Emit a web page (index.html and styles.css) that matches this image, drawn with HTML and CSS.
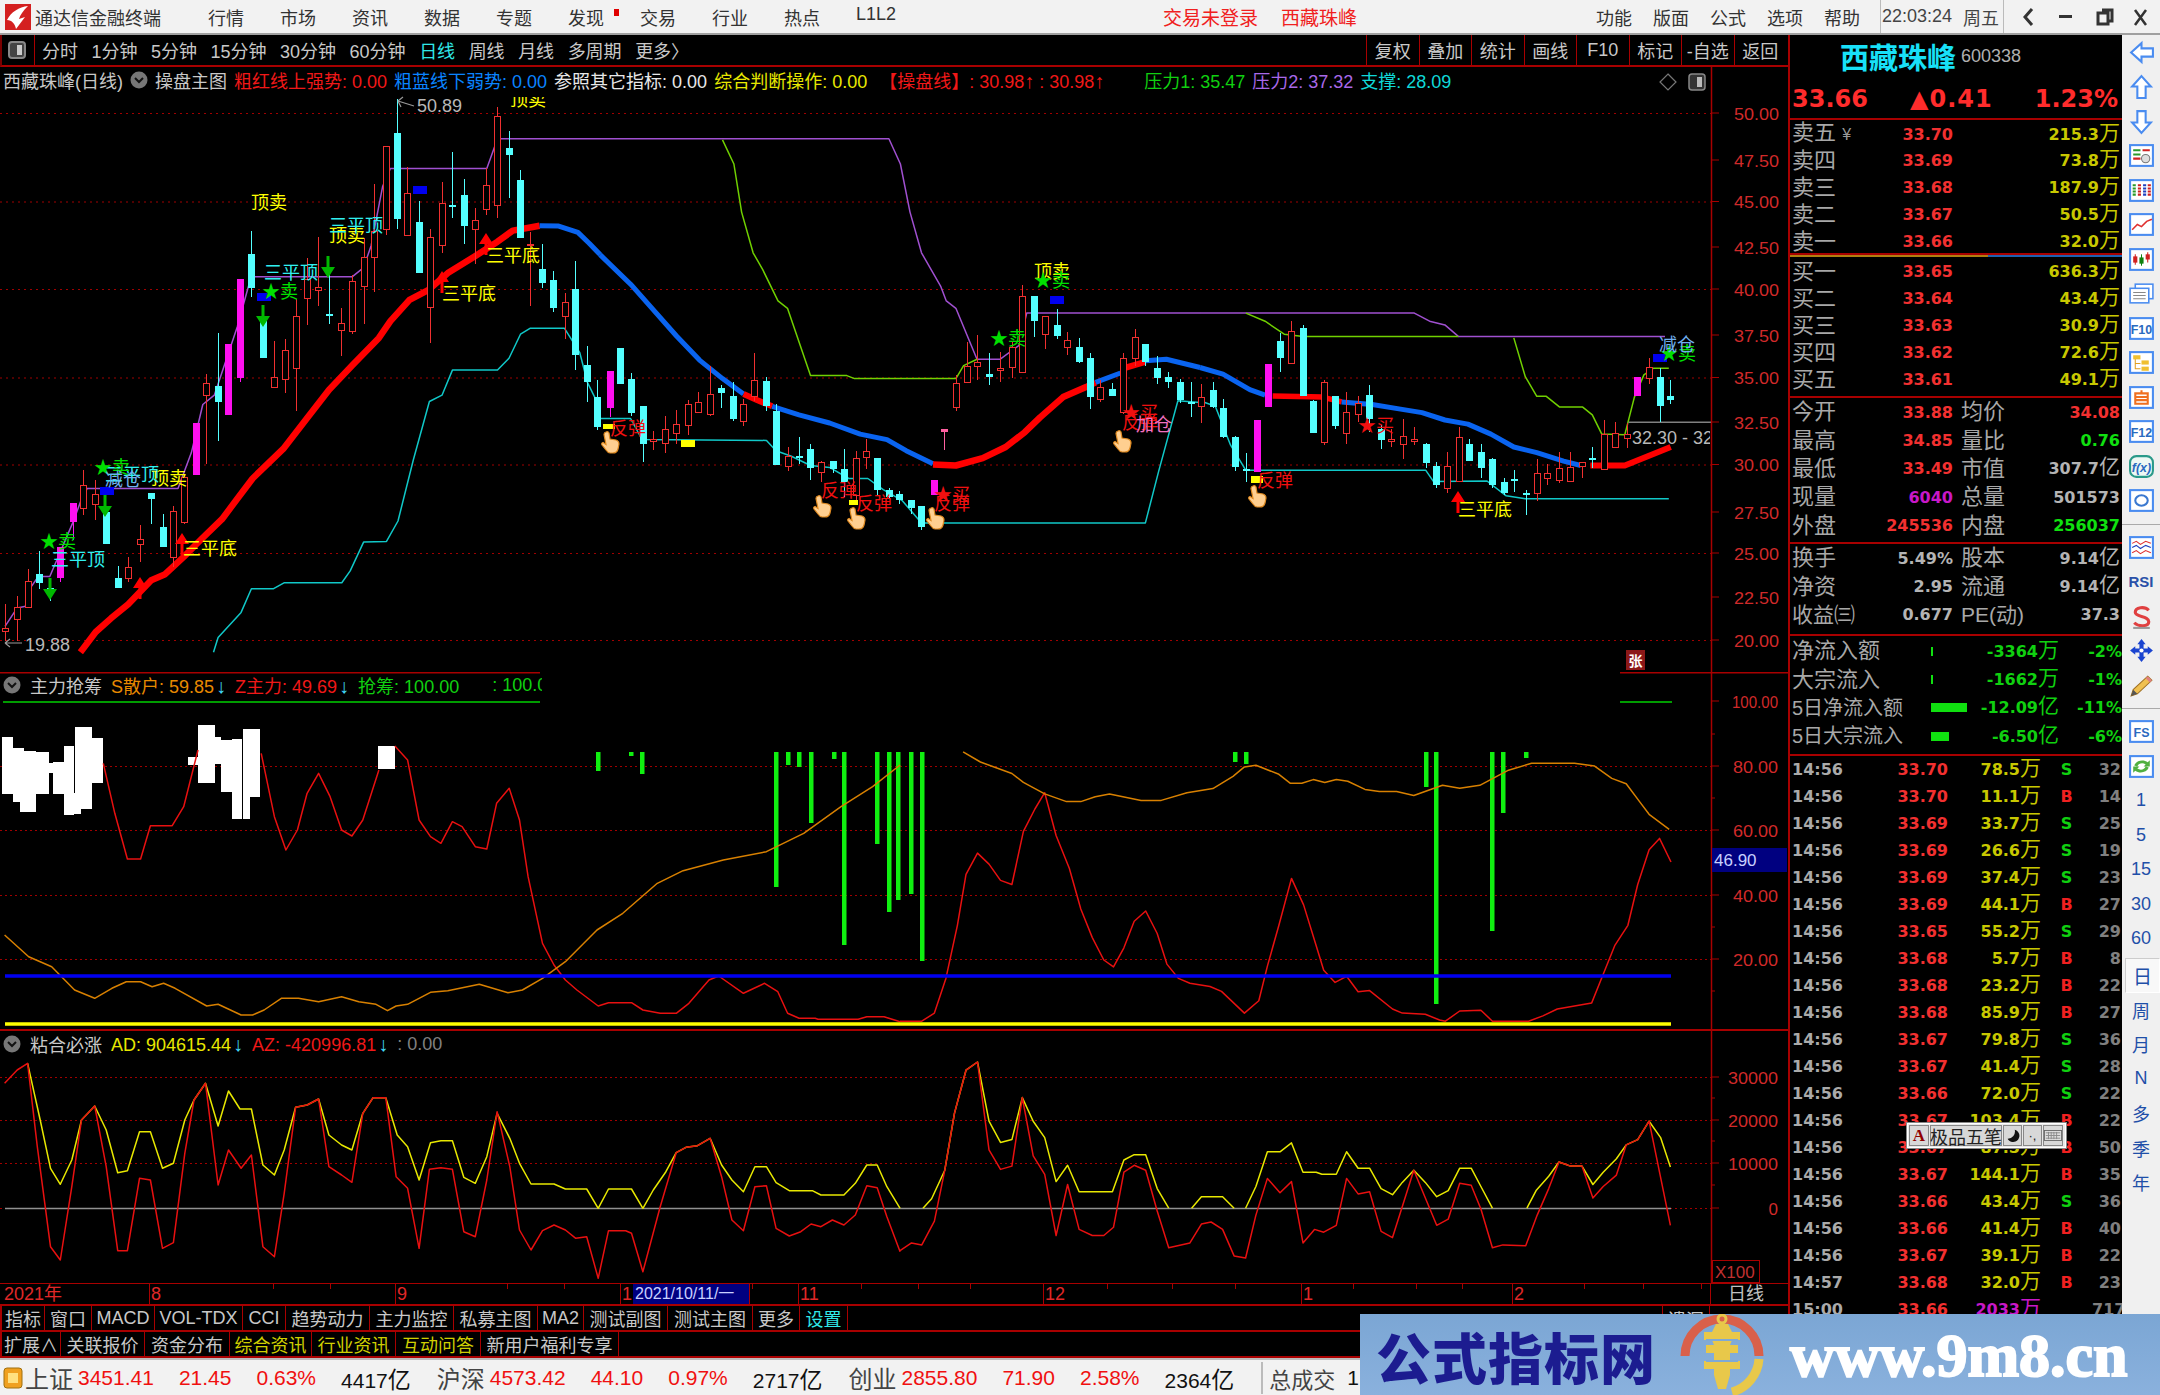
FILE: index.html
```html
<!DOCTYPE html>
<html lang="zh">
<head>
<meta charset="utf-8">
<title>通达信金融终端</title>
<link rel="stylesheet" href="styles.css">
</head>
<body>
<div class="app">
  <header class="titlebar">
    <svg class="logo" viewBox="0 0 26 26"><rect width="26" height="26" fill="#d42020"/><path d="M2 16 C6 8 14 3 23 2 C18 7 15 11 14 15 L20 13 L11 25 C10 20 7 16 2 16Z" fill="#fff"/></svg>
    <span class="appname">通达信金融终端</span>
    <nav class="menu"><span>行情</span><span>市场</span><span>资讯</span><span>数据</span><span>专题</span><span class="flag">发现</span><span>交易</span><span>行业</span><span>热点</span><span>L1L2</span></nav>
    <span class="login">交易未登录</span><span class="stockname">西藏珠峰</span>
    <nav class="menu2"><span>功能</span><span>版面</span><span>公式</span><span>选项</span><span>帮助</span></nav>
    <div class="clock"><span class="time">22:03:24</span><span class="wk">周五</span></div>
    <svg class="winbtns" viewBox="0 0 150 34"><path d="M28 9 L21 17 L28 25" fill="none" stroke="#333" stroke-width="3"/><rect x="55" y="15" width="13" height="3" fill="#333"/><path d="M98 10h10v11h-3M94 13h10v11h-10z" fill="none" stroke="#333" stroke-width="3"/><path d="M131 10 L142 25 M142 10 L131 25" stroke="#333" stroke-width="2.5"/></svg>
  </header>

  <main class="main">
    <section class="chartcol">
      <div class="toolbar">
        <svg class="tb-icon" viewBox="0 0 24 24"><rect x="4" y="4" width="16" height="16" rx="3" fill="#444" stroke="#888" stroke-width="2"/><rect x="12" y="7" width="5" height="10" fill="#ccc"/></svg>
        <div class="periods"><span>分时</span><span>1分钟</span><span>5分钟</span><span>15分钟</span><span>30分钟</span><span>60分钟</span><span class="on">日线</span><span>周线</span><span>月线</span><span>多周期</span><span>更多〉</span></div>
        <div class="tools"><span>复权</span><span>叠加</span><span>统计</span><span>画线</span><span>F10</span><span>标记</span><span>-自选</span><span>返回</span></div>
      </div>

      <div class="panel p1">
        <svg id="chart1" class="plot" viewBox="0 67 1788 605"></svg>
        <div class="legend l1">
          <span class="g">西藏珠峰(日线)</span>
          <svg class="cir" viewBox="0 0 18 18"><circle cx="9" cy="9" r="8.5" fill="#777"/><path d="M5 7 L9 11 L13 7" fill="none" stroke="#111" stroke-width="2"/></svg>
          <span class="g">操盘主图</span>
          <span class="r">粗红线上强势: 0.00</span>
          <span class="b">粗蓝线下弱势: 0.00</span>
          <span class="w">参照其它指标: 0.00</span>
          <span class="y">综合判断操作: 0.00</span>
          <span class="r wide">【操盘线】: 30.98<i class="up">↑</i> : 30.98<i class="up">↑</i></span>
          <span class="gn">压力1: 35.47</span>
          <span class="pu">压力2: 37.32</span>
          <span class="cy">支撑: 28.09</span>
        </div>
      </div>

      <div class="panel p2">
        <svg id="chart2" class="plot" viewBox="0 672 1788 359"></svg>
        <div class="legend l2">
          <svg class="cir" viewBox="0 0 18 18"><circle cx="9" cy="9" r="8.5" fill="#777"/><path d="M5 7 L9 11 L13 7" fill="none" stroke="#111" stroke-width="2"/></svg>
          <span class="g">主力抢筹</span>
          <span class="o">S散户: 59.85<i class="ar">↓</i></span>
          <span class="r">Z主力: 49.69<i class="ar">↓</i></span>
          <span class="gn">抢筹: 100.00</span>
          <span class="gn clip">: 100.0</span>
        </div>
      </div>

      <div class="panel p3">
        <svg id="chart3" class="plot" viewBox="0 1031 1788 252"></svg>
        <div class="legend l3">
          <svg class="cir" viewBox="0 0 18 18"><circle cx="9" cy="9" r="8.5" fill="#777"/><path d="M5 7 L9 11 L13 7" fill="none" stroke="#111" stroke-width="2"/></svg>
          <span class="g">粘合必涨</span>
          <span class="y">AD: 904615.44<i class="ar">↓</i></span>
          <span class="r">AZ: -420996.81<i class="ar">↓</i></span>
          <span class="dg">: 0.00</span>
        </div>
      </div>

      <div class="dates">
        <svg id="ticks" class="ticks" viewBox="0 0 1788 6"></svg>
        <span>2021年</span><span>8</span><span>9</span><span>1</span><span class="sel">2021/10/11/一</span><span></span><span>11</span><span>12</span><span>1</span><span>2</span><span class="dl">日线</span>
      </div>
      <div class="btnrow b1"><span>指标</span><span>窗口</span><span>MACD</span><span>VOL-TDX</span><span>CCI</span><span>趋势动力</span><span>主力监控</span><span>私募主图</span><span>MA2</span><span>测试副图</span><span>测试主图</span><span>更多</span><span class="cyt">设置</span><span class="fill"></span><span class="lk">遗漏</span></div>
      <div class="btnrow b2"><span>扩展∧</span><span>关联报价</span><span>资金分布</span><span class="yt">综合资讯</span><span class="yt">行业资讯</span><span class="yt">互动问答</span><span>新用户福利专享</span></div>
    </section>

    <aside class="quote">
      <div class="qtitle"><span class="qname">西藏珠峰</span><span class="qcode">600338</span></div>
      <div class="qprice"><span>33.66</span><span>▲0.41</span><span>1.23%</span></div>
      <div class="sec five">
        <div class="r5"><span class="lb">卖五 <i class="yen">¥</i></span><b class="rd">33.70</b><b class="ol">215.3<em>万</em></b></div>
        <div class="r5"><span class="lb">卖四</span><b class="rd">33.69</b><b class="ol">73.8<em>万</em></b></div>
        <div class="r5"><span class="lb">卖三</span><b class="rd">33.68</b><b class="ol">187.9<em>万</em></b></div>
        <div class="r5"><span class="lb">卖二</span><b class="rd">33.67</b><b class="ol">50.5<em>万</em></b></div>
        <div class="r5"><span class="lb">卖一</span><b class="rd">33.66</b><b class="ol">32.0<em>万</em></b></div>
      </div>
      <div class="twotone"></div>
      <div class="sec five buy">
        <div class="r5"><span class="lb">买一</span><b class="rd">33.65</b><b class="ol">636.3<em>万</em></b></div>
        <div class="r5"><span class="lb">买二</span><b class="rd">33.64</b><b class="ol">43.4<em>万</em></b></div>
        <div class="r5"><span class="lb">买三</span><b class="rd">33.63</b><b class="ol">30.9<em>万</em></b></div>
        <div class="r5"><span class="lb">买四</span><b class="rd">33.62</b><b class="ol">72.6<em>万</em></b></div>
        <div class="r5"><span class="lb">买五</span><b class="rd">33.61</b><b class="ol">49.1<em>万</em></b></div>
      </div>
      <div class="sec stats">
        <div class="rs"><span class="lb">今开</span><b class="rd">33.88</b><span class="lb">均价</span><b class="rd">34.08</b></div>
        <div class="rs"><span class="lb">最高</span><b class="rd">34.85</b><span class="lb">量比</span><b class="gr">0.76</b></div>
        <div class="rs"><span class="lb">最低</span><b class="rd">33.49</b><span class="lb">市值</span><b class="wt">307.7<em>亿</em></b></div>
        <div class="rs"><span class="lb">现量</span><b class="mg">6040</b><span class="lb">总量</span><b class="wt">501573</b></div>
        <div class="rs"><span class="lb">外盘</span><b class="rd">245536</b><span class="lb">内盘</span><b class="gr">256037</b></div>
      </div>
      <div class="sec stats s3">
        <div class="rs"><span class="lb">换手</span><b class="wt">5.49%</b><span class="lb">股本</span><b class="wt">9.14<em>亿</em></b></div>
        <div class="rs"><span class="lb">净资</span><b class="wt">2.95</b><span class="lb">流通</span><b class="wt">9.14<em>亿</em></b></div>
        <div class="rs"><span class="lb lbn">收益㈢</span><b class="wt">0.677</b><span class="lb lbn">PE(动)</span><b class="wt">37.3</b></div>
      </div>
      <div class="sec flow">
        <div class="rf"><span class="lb">净流入额</span><div class="fv"><i class="bar b0"></i><b class="gb">-3364<em>万</em></b></div><b class="gb">-2%</b></div>
        <div class="rf"><span class="lb">大宗流入</span><div class="fv"><i class="bar b0"></i><b class="gb">-1662<em>万</em></b></div><b class="gb">-1%</b></div>
        <div class="rf"><span class="lb lb5">5日净流入额</span><div class="fv"><i class="bar b1w"></i><b class="gb">-12.09<em>亿</em></b></div><b class="gb">-11%</b></div>
        <div class="rf"><span class="lb lb5">5日大宗流入</span><div class="fv"><i class="bar b2w"></i><b class="gb">-6.50<em>亿</em></b></div><b class="gb">-6%</b></div>
      </div>
      <div class="trades">
        <div class="rt"><b>14:56</b><b class="rd">33.70</b><b class="ol">78.5<em>万</em></b><b class="s">S</b><b class="n">32</b></div>
        <div class="rt"><b>14:56</b><b class="rd">33.70</b><b class="ol">11.1<em>万</em></b><b class="bb">B</b><b class="n">14</b></div>
        <div class="rt"><b>14:56</b><b class="rd">33.69</b><b class="ol">33.7<em>万</em></b><b class="s">S</b><b class="n">25</b></div>
        <div class="rt"><b>14:56</b><b class="rd">33.69</b><b class="ol">26.6<em>万</em></b><b class="s">S</b><b class="n">19</b></div>
        <div class="rt"><b>14:56</b><b class="rd">33.69</b><b class="ol">37.4<em>万</em></b><b class="s">S</b><b class="n">23</b></div>
        <div class="rt"><b>14:56</b><b class="rd">33.69</b><b class="ol">44.1<em>万</em></b><b class="bb">B</b><b class="n">27</b></div>
        <div class="rt"><b>14:56</b><b class="rd">33.65</b><b class="ol">55.2<em>万</em></b><b class="s">S</b><b class="n">29</b></div>
        <div class="rt"><b>14:56</b><b class="rd">33.68</b><b class="ol">5.7<em>万</em></b><b class="bb">B</b><b class="n">8</b></div>
        <div class="rt"><b>14:56</b><b class="rd">33.68</b><b class="ol">23.2<em>万</em></b><b class="bb">B</b><b class="n">22</b></div>
        <div class="rt"><b>14:56</b><b class="rd">33.68</b><b class="ol">85.9<em>万</em></b><b class="bb">B</b><b class="n">27</b></div>
        <div class="rt"><b>14:56</b><b class="rd">33.67</b><b class="ol">79.8<em>万</em></b><b class="s">S</b><b class="n">36</b></div>
        <div class="rt"><b>14:56</b><b class="rd">33.67</b><b class="ol">41.4<em>万</em></b><b class="s">S</b><b class="n">28</b></div>
        <div class="rt"><b>14:56</b><b class="rd">33.66</b><b class="ol">72.0<em>万</em></b><b class="s">S</b><b class="n">22</b></div>
        <div class="rt"><b>14:56</b><b class="rd">33.67</b><b class="ol">103.4<em>万</em></b><b class="bb">B</b><b class="n">22</b></div>
        <div class="rt"><b>14:56</b><b class="rd">33.67</b><b class="ol">87.5<em>万</em></b><b class="bb">B</b><b class="n">50</b></div>
        <div class="rt"><b>14:56</b><b class="rd">33.67</b><b class="ol">144.1<em>万</em></b><b class="bb">B</b><b class="n">35</b></div>
        <div class="rt"><b>14:56</b><b class="rd">33.66</b><b class="ol">43.4<em>万</em></b><b class="s">S</b><b class="n">36</b></div>
        <div class="rt"><b>14:56</b><b class="rd">33.66</b><b class="ol">41.4<em>万</em></b><b class="bb">B</b><b class="n">40</b></div>
        <div class="rt"><b>14:56</b><b class="rd">33.67</b><b class="ol">39.1<em>万</em></b><b class="bb">B</b><b class="n">22</b></div>
        <div class="rt"><b>14:57</b><b class="rd">33.68</b><b class="ol">32.0<em>万</em></b><b class="bb">B</b><b class="n">23</b></div>
        <div class="rt"><b>15:00</b><b class="rd">33.66</b><b class="mg">2033<em>万</em></b><b></b><b class="n">717</b></div>
      </div>
      <div class="ime">
        <b class="ia">A</b><span class="im">极品五笔</span>
        <svg class="ic" viewBox="0 0 19 21"><path d="M12 4 A7 7 0 1 1 4 14 A8 8 0 0 0 12 4Z" fill="#111"/></svg>
        <span class="ic">·,</span>
        <svg class="kb" viewBox="0 0 20 12"><rect x=".5" y=".5" width="19" height="11" fill="#ddd" stroke="#666"/><path d="M2 3h16M2 6h16M2 9h16M5 2v8M8 2v8M11 2v8M14 2v8" stroke="#888" stroke-width="1"/></svg>
      </div>
    </aside>

    <aside class="strip">
      <div class="ti"><svg viewBox="0 0 26 26"><path d="M3 13 L13 4 V9 H24 V17 H13 V22 Z" fill="#fff" stroke="#4a8cf0" stroke-width="2"/></svg></div>
      <div class="ti"><svg viewBox="0 0 26 26"><path d="M13 3 L22 13 H17 V24 H9 V13 H4 Z" fill="#fff" stroke="#4a8cf0" stroke-width="2"/></svg></div>
      <div class="ti"><svg viewBox="0 0 26 26"><path d="M13 24 L22 14 H17 V3 H9 V14 H4 Z" fill="#fff" stroke="#4a8cf0" stroke-width="2"/></svg></div>
      <div class="ti"><svg viewBox="0 0 26 26"><rect x="2" y="3" width="22" height="20" fill="#fff" stroke="#4a8cf0" stroke-width="2"/><path d="M5 8h7M5 12h7" stroke="#2a9a2a" stroke-width="2"/><path d="M14 8h7M5 16h7" stroke="#d02020" stroke-width="2"/><circle cx="17" cy="16" r="4" fill="#ddd" stroke="#777"/></svg></div>
      <div class="ti"><svg viewBox="0 0 26 26"><rect x="2" y="3" width="22" height="20" fill="#fff" stroke="#4a8cf0" stroke-width="2"/><path d="M6 7v12" stroke="#2a9a2a" stroke-width="3" stroke-dasharray="2 1"/><path d="M11 7v12" stroke="#d02020" stroke-width="3" stroke-dasharray="2 1"/><path d="M16 7v12" stroke="#2040c0" stroke-width="3" stroke-dasharray="2 1"/><path d="M20.500 7v12" stroke="#d02020" stroke-width="3" stroke-dasharray="2 1"/></svg></div>
      <div class="ti"><svg viewBox="0 0 26 26"><rect x="2" y="3" width="22" height="20" fill="#fff" stroke="#4a8cf0" stroke-width="2"/><path d="M4 18 L9 13 L13 15 L18 10 L23 8" fill="none" stroke="#e03030" stroke-width="1.500"/></svg></div>
      <div class="ti"><svg viewBox="0 0 26 26"><rect x="2" y="3" width="22" height="20" fill="#fff" stroke="#4a8cf0" stroke-width="2"/><path d="M7 8v10M19 6v10" stroke="#d02020"/><path d="M13 8v11" stroke="#108010"/><rect x="5" y="10" width="4" height="6" fill="#d02020"/><rect x="11" y="11" width="4" height="6" fill="#108010"/><rect x="17" y="8" width="4" height="5" fill="#d02020"/></svg></div>
      <div class="ti"><svg viewBox="0 0 26 26"><rect x="7" y="4" width="17" height="14" fill="#fff" stroke="#4a8cf0" stroke-width="1.500"/><rect x="2" y="8" width="18" height="14" fill="#fff" stroke="#4a8cf0" stroke-width="1.500"/><path d="M5 12h12M5 15h12M5 18h12" stroke="#888"/></svg></div>
      <div class="ti"><svg viewBox="0 0 26 26"><rect x="2" y="3" width="22" height="20" fill="#fff" stroke="#4a8cf0" stroke-width="2"/><text class="ict" x="13" y="18">F10</text></svg></div>
      <div class="ti"><svg viewBox="0 0 26 26"><rect x="2" y="3" width="22" height="20" fill="#fff" stroke="#4a8cf0" stroke-width="2"/><path d="M7 9v10h5M7 14h5" fill="none" stroke="#e0a020"/><rect x="5" y="6" width="7" height="4" fill="#f0c030"/><rect x="13" y="11" width="7" height="4" fill="#f0c030"/><rect x="13" y="17" width="7" height="4" fill="#f0c030"/></svg></div>
      <div class="ti"><svg viewBox="0 0 26 26"><rect x="2" y="3" width="22" height="20" fill="#fff" stroke="#4a8cf0" stroke-width="2"/><path d="M7 9h12v10h-12z M7 12.500h12M7 15.500h12M13 6v3" fill="none" stroke="#f07020" stroke-width="2"/></svg></div>
      <div class="ti"><svg viewBox="0 0 26 26"><rect x="2" y="3" width="22" height="20" fill="#fff" stroke="#4a8cf0" stroke-width="2"/><text class="ict" x="13" y="18">F12</text></svg></div>
      <div class="ti"><svg viewBox="0 0 26 26"><rect x="2" y="3" width="22" height="20" rx="6" fill="#eef8f4" stroke="#2a9a8a" stroke-width="2"/><text class="ict fx" x="13" y="18">f(x)</text></svg></div>
      <div class="ti"><svg viewBox="0 0 26 26"><rect x="2" y="3" width="22" height="20" fill="#fff" stroke="#4a8cf0" stroke-width="2"/><ellipse cx="13" cy="13" rx="6" ry="5" fill="none" stroke="#3a78d0" stroke-width="2"/></svg></div>
      <div class="tsep"></div>
      <div class="ti"><svg viewBox="0 0 26 26"><rect x="2" y="3" width="22" height="20" fill="#fff" stroke="#4a8cf0" stroke-width="2"/><path d="M4 9 L8 7 L12 10 L17 7 L22 9" fill="none" stroke="#e03030"/><path d="M4 13 L8 11 L12 14 L17 11 L22 13" fill="none" stroke="#2040c0"/><path d="M4 18 L8 16 L12 19 L17 16 L22 18" fill="none" stroke="#e03030"/></svg></div>
      <div class="ti rsi">RSI</div>
      <div class="ti"><svg viewBox="0 0 26 26"><path d="M20 7 C16 3 7 4 7 9 C7 14 20 12 20 18 C20 23 10 23 6 19" fill="none" stroke="#e04040" stroke-width="3"/><path d="M5 24h16" stroke="#999" stroke-width="2"/></svg></div>
      <div class="ti"><svg viewBox="0 0 26 26"><path d="M13 2 L17 7 H15 V11 H19 V9 L24 13 L19 17 V15 H15 V19 H17 L13 24 L9 19 H11 V15 H7 V17 L2 13 L7 9 V11 H11 V7 H9 Z" fill="#1a44d0"/><circle cx="13" cy="13" r="2" fill="#fff"/></svg></div>
      <div class="ti"><svg viewBox="0 0 26 26"><path d="M3 23 L5 17 L19 4 L23 8 L9 21 Z" fill="#f0c050" stroke="#a07020"/><path d="M19 4 L23 8 L21 10 L17 6 Z" fill="#e08080"/><path d="M3 23 L5 17 L9 21 Z" fill="#555"/></svg></div>
      <div class="tsep"></div>
      <div class="ti"><svg viewBox="0 0 26 26"><rect x="2" y="3" width="22" height="20" fill="#fff" stroke="#4a8cf0" stroke-width="2"/><text class="ict" x="13" y="18">FS</text></svg></div>
      <div class="ti"><svg viewBox="0 0 26 26"><rect x="2" y="3" width="22" height="20" fill="#fff" stroke="#4a8cf0" stroke-width="2"/><path d="M6 12 C8 7 15 6 19 9 L21 7 V13 H15 L17 11 C14 9 10 10 9 13Z M20 14 C18 19 11 20 7 17 L5 19 V13 H11 L9 15 C12 17 16 16 17 13Z" fill="#50b040"/></svg></div>
      <div class="tx">1</div><div class="tx">5</div><div class="tx">15</div><div class="tx">30</div><div class="tx">60</div>
      <div class="tx sel">日</div><div class="tx">周</div><div class="tx">月</div><div class="tx">N</div><div class="tx">多</div><div class="tx">季</div><div class="tx">年</div>
    </aside>
  </main>

  <footer class="status">
    <svg class="st-ic" viewBox="0 0 20 22"><rect x="1" y="1" width="18" height="20" rx="3" fill="#f0a020" stroke="#a07010"/><rect x="5" y="6" width="10" height="10" fill="#ffe080"/></svg>
    <span class="st-l">上证</span><b class="red">3451.41</b><b class="red">21.45</b><b class="red">0.63%</b><b class="blk">4417<em>亿</em></b>
    <span class="st-l">沪深</span><b class="red">4573.42</b><b class="red">44.10</b><b class="red">0.97%</b><b class="blk">2717<em>亿</em></b>
    <span class="st-l">创业</span><b class="red">2855.80</b><b class="red">71.90</b><b class="red">2.58%</b><b class="blk">2364<em>亿</em></b>
    <span class="st-t">总成交</span><b class="blk">1</b>
  </footer>

  <div class="watermark">
    <span class="wm-cn">公式指标网</span>
    <svg class="wm-logo" viewBox="0 0 84 82">
      <path d="M5 42 A37 37 0 0 1 79 42" fill="none" stroke="#d9604a" stroke-width="9"/>
      <path d="M79 45 A37 37 0 0 1 52 78" fill="none" stroke="#e8c84a" stroke-width="9"/>
      <circle cx="42" cy="5" r="4" fill="none" stroke="#e8c84a" stroke-width="3"/>
      <path d="M36 10h12l4 8h8v8h-8l-2 5h8v8h-8v8h10v8h-10v6l-4 14h-8l-4-14v-6h-10v-8h10v-8h-8v-8h8l-2-5h-8v-8h8z" fill="#e8c84a"/>
      <path d="M26 26h32M26 47h32" stroke="#7ea9d6" stroke-width="2"/>
    </svg>
    <span class="wm-en">www.9m8.cn</span>
  </div>
</div>
<script src="chart.js"></script>
</body>
</html>
```

FILE: styles.css
```css
*{box-sizing:border-box;margin:0;padding:0}
html,body{width:2160px;height:1395px;overflow:hidden;background:#000}
body{font-family:"Liberation Sans","Noto Sans CJK SC",sans-serif}
i,em{font-style:normal}
.app{position:relative;width:2160px;height:1395px;display:flex;flex-direction:column}

.titlebar{height:35px;flex:none;background:#f2f2f2;border-bottom:2px solid #a0a0a0;display:flex;align-items:center;font-size:18px;color:#333;padding-left:5px}
.logo{width:26px;height:26px;flex:none}
.appname{margin-left:4px;width:173px;flex:none;font-size:18px;white-space:nowrap}
.menu{display:flex;width:720px;flex:none}
.menu span{width:72px;flex:none;white-space:nowrap;position:relative}
.menu .flag::after{content:"";position:absolute;left:46px;top:5px;width:5px;height:7px;background:#e00000}
.login{margin-left:235px;color:#f02020;width:118px;flex:none;font-size:19px}
.stockname{color:#f02020;width:315px;flex:none;font-size:19px}
.menu2{display:flex;width:284px;flex:none}
.menu2 span{width:57px;flex:none}
.clock{display:flex;height:33px;align-items:center;border-left:1px solid #bbb;border-right:1px solid #bbb;padding-left:1px;width:124px;flex:none;color:#444}
.time{font-size:18px;width:81px;flex:none}
.wk{font-size:18px}
.winbtns{width:150px;height:34px;flex:none}

.main{height:1323px;flex:none;display:flex;overflow:hidden}
.chartcol{width:1788px;flex:none;display:flex;flex-direction:column;background:#000}
.toolbar{height:32px;flex:none;display:flex;align-items:stretch;border-bottom:2px solid #a80000;border-left:2px solid #7a0000;color:#c8c8c8;font-size:18px}
.tb-icon{width:33px;height:30px;padding:3px 5px 3px 3px;border-right:1px solid #a80000;flex:none}
.periods{display:flex;align-items:center;gap:13.500px;padding-left:7px;width:1331px;flex:none;white-space:nowrap}
.periods .on{color:#30e8e8}
.tools{display:flex;height:30px}
.tools span{width:52.500px;flex:none;display:flex;align-items:center;justify-content:center;border-left:1px solid #a80000;white-space:nowrap}

.panel{position:relative;flex:none}
.p1{height:605px}
.p2{height:359px}
.p3{height:252px}
.plot{display:block;width:1788px;height:100%}
.legend{position:absolute;left:3px;display:flex;align-items:center;font-size:18px;white-space:nowrap;height:24px}
.l1{top:1px;gap:7px;right:0}
.l2{top:0;gap:9px;height:26px}
.l3{top:0;gap:9px;height:26px}
.cir{width:18px;height:18px;flex:none}
.legend .g{color:#c8c8c8}
.legend .r{color:#f01818}
.legend .b{color:#0a84ff}
.legend .w{color:#e8e8e8}
.legend .y{color:#e8e800}
.legend .o{color:#e88a00}
.legend .gn{color:#10d010}
.legend .pu{color:#a868e8}
.legend .cy{color:#10d8d8}
.legend .dg{color:#808080}
.legend .wide{width:258px;margin-left:5px}
.legend .ar{color:#40d8f8;margin-left:2px;font-size:20px}
.legend .up{font-size:20px}
.legend .clip{width:50px;overflow:hidden;margin-left:24px}

.dates{position:relative;height:23px;flex:none;display:flex;border-top:1px solid #a80000;border-bottom:2px solid #a80000;color:#e02828;font-size:18px;line-height:20px}
.dates span{border-left:1px solid #a80000;padding-left:1px;white-space:nowrap;overflow:hidden;flex:none}
.dates span:nth-of-type(1){width:149px;border-left:0;padding-left:4px}
.dates span:nth-of-type(2){width:246px}
.dates span:nth-of-type(3){width:225px}
.dates span:nth-of-type(4){width:13px}
.dates span:nth-of-type(5){width:116px;background:#000080;color:#c8d0ff;font-size:16px;padding-left:2px;border-left:0}
.dates span:nth-of-type(6){width:49px}
.dates span:nth-of-type(7){width:245px}
.dates span:nth-of-type(8){width:258px}
.dates span:nth-of-type(9){width:211px}
.dates span:nth-of-type(10){width:198px}
.dates .dl{width:78px;color:#c0c0c0;padding-left:17px}
.ticks{position:absolute;left:0;top:0;width:1788px;height:6px}

.btnrow{height:26px;flex:none;display:flex;border-bottom:2px solid #a80000;color:#c8c8c8;font-size:18px;border-left:2px solid #a80000;overflow:hidden}
.btnrow span{display:flex;align-items:center;justify-content:center;border-right:1px solid #a80000;white-space:nowrap;flex:none}
.b1 span:nth-child(1){width:43px}
.b1 span:nth-child(2){width:47px}
.b1 span:nth-child(3){width:63px}
.b1 span:nth-child(4){width:88px}
.b1 span:nth-child(5){width:43px}
.b1 span:nth-child(6){width:84px}
.b1 span:nth-child(7){width:84px}
.b1 span:nth-child(8){width:84px}
.b1 span:nth-child(9){width:46px}
.b1 span:nth-child(10){width:84px}
.b1 span:nth-child(11){width:85px}
.b1 span:nth-child(12){width:47px}
.b1 span:nth-child(13){width:48px}
.b1 .fill{width:815px;border-right:1px solid #a80000}
.b1 .lk{width:47px;align-items:flex-start}
.cyt{color:#30e8e8}
.yt{color:#d0d000}
.b2 span:nth-child(1){width:59px}
.b2 span:nth-child(2){width:84px}
.b2 span:nth-child(3){width:85px}
.b2 span:nth-child(4){width:82px}
.b2 span:nth-child(5){width:84px}
.b2 span:nth-child(6){width:85px}
.b2 span:nth-child(7){width:138px}

.quote{position:relative;width:334px;flex:none;border-left:2px solid #a80000;background:#000;color:#aaa;padding-left:0;height:1323px;overflow:hidden}
.qtitle{height:42px;display:flex;align-items:center;padding-left:50px;gap:5px}
.qname{color:#18e0f8;font-size:29px;font-weight:700;white-space:nowrap;letter-spacing:0}
.qcode{color:#b0b0b0;font-size:18px}
.qprice{height:43px;display:flex;justify-content:space-between;align-items:center;padding:2px 4px 0 2px;border-bottom:2px solid #a80000;font:700 24px "DejaVu Sans",sans-serif;color:#ff2c2c}
.qprice span{white-space:nowrap}
.qprice span:nth-child(2){letter-spacing:1px}
.sec{border-bottom:2px solid #a80000}
.five{height:135px}
.buy{height:141px;padding-top:1px}
.twotone{height:2px;background:linear-gradient(90deg,#b08010 0,#b08010 198px,#2060b0 198px)}
.sec b,.trades b{font:700 16px "DejaVu Sans",sans-serif;white-space:nowrap}
.sec b em,.trades b em{font:400 21px "Noto Sans CJK SC",sans-serif;line-height:0}
.lb{font-size:22px;line-height:26px;color:#a8a8a8;white-space:nowrap}
.lbn{font-size:21px}
.lb5{font-size:20px}
.yen{font-size:16px;color:#999}
.r5{height:27px;display:grid;grid-template-columns:97px 64px 167px;align-items:center;padding-left:2px}
.r5 b,.rs b,.rf b,.rt b{text-align:right}
.rd{color:#f23030}
.ol{color:#c8c800}
.gr{color:#10e010}
.wt{color:#b4b4b4}
.mg{color:#c818c8}
.gb{color:#10d010}
.stats{height:146px}
.s3{height:92px}
.rs{height:28.400px;display:grid;grid-template-columns:69px 92px 8px 60px 99px;align-items:center;padding-left:2px}
.rs .lb:nth-child(3){grid-column:4}
.rs b:nth-child(4){grid-column:5}
.flow{height:120px;padding-top:1px}
.rf{height:28.400px;display:grid;grid-template-columns:139px 128px 63px;align-items:center;padding-left:2px}
.fv{display:flex;align-items:center;justify-content:space-between;white-space:nowrap}
.bar{display:block;height:9px;background:#10e010;flex:none}
.b0{width:2px}
.b1w{width:36px}
.b2w{width:18px}
.trades{padding-top:0}
.rt{height:27px;display:grid;grid-template-columns:61px 95px 93px 51px 29px;align-items:center;padding-left:2px;color:#aaa}
.rt b:first-child{text-align:left}
.rt .s,.rt .bb{text-align:center}
.rt .s{color:#10d010}
.rt .bb{color:#f02020}
.rt .n{color:#808080}
.rt em{font-size:21px}
.ime{position:absolute;left:117px;top:1088px;width:159px;height:25px;background:#e8e8e8;border:1px solid #fff;display:flex;align-items:stretch;padding:1px;gap:1px;color:#222;font-size:18px;box-shadow:0 0 0 1px #888}
.ime>*{border:1px solid #888;background:#d8d8d8;display:flex;align-items:center;justify-content:center;flex:none}
.ia{width:20px;color:#900000;font:700 17px "Liberation Serif",serif}
.im{width:72px;white-space:nowrap;font-size:18px}
.ic{width:19px;font-size:13px}
.kb{width:20px;height:21px}

.strip{width:38px;flex:none;background:#f0f0f0;height:1323px;overflow:hidden}
.ti,.tx{height:34.500px;display:flex;align-items:center;justify-content:center}
.ti svg{width:27px;height:27px}
.ict{font:700 12px "Liberation Sans",sans-serif;fill:#2a6ac0;text-anchor:middle}
.fx{font-style:italic}
.tsep{height:12px;display:flex;align-items:center}
.tsep::before{content:"";display:block;width:100%;height:1px;background:#aaa}
.rsi{color:#2a50a8;font:700 15px "Liberation Sans",sans-serif}
.tx{color:#1f4fa8;font-size:18px}
.tx.sel{background:#f8f8f8;border:1px solid;border-color:#ccc #fff #fff #ccc;margin:2px 0 0 3px;font-size:19px}

.status{flex:none;height:37px;background:#f2f2f2;display:flex;align-items:center;font-size:21px;color:#222;border-top:2px solid #bbb;padding-left:3px}
.status b{font-weight:400;white-space:nowrap}
.status .red{color:#f01010;margin-left:25px}
.status .blk{color:#111;margin-left:25px}
.status em{font-size:23px;font-family:"Noto Sans CJK SC",sans-serif}
.st-ic{width:20px;height:22px;flex:none}
.st-l{font-size:24px;color:#444;margin-left:26px;margin-right:-20px;white-space:nowrap}
.st-ic + .st-l{margin-left:2px}
.st-t{font-size:22px;color:#444;margin-left:27px;padding-left:6px;border-left:2px solid #bbb;white-space:nowrap;margin-right:-13px}

.watermark{position:absolute;left:1360px;top:1314px;width:800px;height:81px;background:linear-gradient(180deg,#7ba6d4,#8ab1dd);display:flex;align-items:center;overflow:hidden}
.wm-cn{margin-left:16px;width:304px;flex:none;font:900 55px "Noto Sans CJK SC",sans-serif;color:#1c1c90;white-space:nowrap;letter-spacing:1px}
.wm-logo{width:84px;height:82px;flex:none}
.wm-en{margin-left:26px;font:700 62px "Liberation Serif",serif;color:#fff;-webkit-text-stroke:2px #fff;white-space:nowrap;line-height:70px}

.mk{font:400 18px "Noto Sans CJK SC",sans-serif;dominant-baseline:central}
.ax{font:400 17px "Liberation Sans",sans-serif;fill:#d02a2a;text-anchor:end;dominant-baseline:central}
.gt{font:400 18px "Liberation Sans",sans-serif;fill:#b8b8b8;dominant-baseline:central}
.x100{font:400 17px "Liberation Sans",sans-serif;fill:#c03030;dominant-baseline:central}
.zh{font:700 14px "Noto Sans CJK SC",sans-serif;fill:#fff;text-anchor:middle;dominant-baseline:central}
.axb{font:400 17px "Liberation Sans",sans-serif;fill:#c8d0ff;dominant-baseline:central}
```

FILE: chart.js
```js
(function () {
  var NS = 'http://www.w3.org/2000/svg';
  function el(p, tag, a, t) {
    var e = document.createElementNS(NS, tag);
    for (var k in a) e.setAttribute(k, a[k]);
    if (t !== undefined) e.textContent = t;
    p.appendChild(e);
    return e;
  }
  var c1 = document.getElementById('chart1'), c2 = document.getElementById('chart2'), c3 = document.getElementById('chart3');
  // crops used when sampling the picture
  function T(ox, oy, sx, sy) { return function (x, y) { return [ox + x / sx, oy + y / sy]; }; }
  var Z7 = T(0, 90, 2.613, 2.703), Z8 = T(600, 90, 2.613, 2.703), Z9 = T(1200, 90, 2.613, 2.703);
  var Z10 = T(0, 660, 1.742, 3), Z12 = T(900, 660, 1.742, 2.45), Z11 = T(0, 1020, 1.742, 3);
  var RED = '#a80000';

  function line(svg, f, pts, color, w, extra) {
    var s = '';
    for (var i = 0; i < pts.length; i += 2) {
      var q = f(pts[i], pts[i + 1]);
      s += (i ? 'L' : 'M') + q[0].toFixed(1) + ' ' + q[1].toFixed(1);
    }
    var a = { d: s, fill: 'none', stroke: color, 'stroke-width': w, 'stroke-linejoin': 'round' };
    for (var k in extra || {}) a[k] = extra[k];
    el(svg, 'path', a);
  }
  function hl(svg, y, x1, x2, color, w, dash) {
    var a = { x1: x1, x2: x2, y1: y, y2: y, stroke: color, 'stroke-width': w || 1 };
    if (dash) a['stroke-dasharray'] = dash;
    el(svg, 'line', a);
  }

  /* ---------- panel 1 ---------- */
  [113, 201.5, 289, 377.5, 464.5, 553, 640].forEach(function (y) { hl(c1, y + .5, 0, 1711, '#a00000', 1, '2 4'); });
  el(c1, 'line', { x1: 1711.5, x2: 1711.5, y1: 67, y2: 672, stroke: RED, 'stroke-width': 1.5 });
  [[50, 113], [47.5, 160], [45, 201.5], [42.5, 247], [40, 289], [37.5, 335], [35, 377.5], [32.5, 422], [30, 464.5], [27.5, 512], [25, 553], [22.5, 597], [20, 640]].forEach(function (t) {
    hl(c1, t[1], 1711, 1719, RED, 1);
    el(c1, 'text', { x: 1779, y: t[1] + 1, 'class': 'ax', textLength: 45, lengthAdjust: 'spacingAndGlyphs' }, t[0].toFixed(2));
  });

  // thin lines: [crop, points]
  var PUR = '#a050d0', GRN = '#70d000', CYN = '#10c8c8';
  line(c1, Z7, [13, 1450, 45, 1400, 70, 1395, 80, 1345, 100, 1315, 130, 1315, 190, 1170, 215, 1100, 228, 1077, 465, 1077, 500, 980, 530, 850, 560, 825, 620, 640, 656, 505, 920, 505, 950, 480, 970, 420, 1000, 260, 1020, 212, 1272, 212, 1300, 132, 1568, 132], PUR, 1.5);
  line(c1, Z8, [0, 132, 755, 132, 785, 200, 810, 330, 840, 440, 890, 530, 905, 570, 930, 590, 985, 728, 1045, 728, 1095, 690, 1115, 603, 1568, 603], PUR, 1.5);
  line(c1, Z9, [0, 603, 560, 603, 600, 625, 640, 635, 675, 666, 1215, 666], PUR, 1.5);
  line(c1, Z8, [320, 135, 350, 200, 370, 330, 400, 440, 425, 485, 465, 570, 490, 590, 550, 772, 645, 772, 665, 780, 930, 780, 950, 745, 985, 728], GRN, 1.5);
  line(c1, Z9, [120, 603, 170, 625, 220, 660, 270, 666, 675, 666], GRN, 1.5);
  line(c1, Z9, [820, 670, 850, 775, 880, 828, 905, 828, 940, 857, 1000, 857, 1025, 878, 1050, 930, 1110, 932, 1135, 830, 1160, 770, 1185, 752, 1225, 752], GRN, 1.5);
  line(c1, Z7, [558, 1520, 570, 1480, 630, 1412, 657, 1348, 715, 1348, 742, 1332, 893, 1332, 915, 1300, 950, 1222, 1010, 1220, 1040, 1165, 1080, 1000, 1122, 842, 1155, 825, 1182, 757, 1300, 757, 1330, 725, 1360, 660, 1385, 644, 1475, 644, 1515, 710, 1535, 790, 1568, 860], CYN, 1.5);
  line(c1, Z8, [0, 888, 80, 888, 110, 945, 435, 947, 460, 975, 500, 990, 550, 1015, 600, 1020, 650, 1050, 700, 1050, 740, 1080, 790, 1110, 840, 1170, 1425, 1170, 1460, 1030, 1510, 840, 1568, 845], CYN, 1.5);
  line(c1, Z9, [0, 840, 40, 855, 80, 960, 120, 1028, 590, 1028, 610, 1058, 750, 1057, 800, 1097, 850, 1105, 1225, 1105], CYN, 1.5);
  line(c1, Z9, [1120, 898, 1335, 898], '#808080', 1.5);

  // the thick trend line
  var TR = '#ff0000', TB = '#0a64f0';
  line(c1, Z7, [210, 1520, 250, 1465, 290, 1428, 335, 1390, 395, 1325, 430, 1310, 480, 1262, 530, 1210, 580, 1160, 620, 1105, 660, 1050, 740, 970, 800, 890, 860, 810, 920, 745, 990, 670, 1020, 625, 1070, 567, 1120, 540, 1170, 495, 1240, 450, 1300, 410, 1340, 380, 1410, 367], TR, 6.5);
  line(c1, Z7, [1410, 367, 1460, 368, 1510, 385, 1540, 415, 1568, 445], TB, 5);
  line(c1, Z8, [0, 445, 80, 525, 140, 595, 200, 665, 260, 730, 320, 780, 375, 822], TB, 5);
  line(c1, Z8, [375, 822, 410, 838, 450, 855], TR, 6);
  line(c1, Z8, [450, 855, 520, 878, 600, 900, 680, 930, 750, 945, 800, 975, 870, 1010], TB, 5);
  line(c1, Z8, [870, 1012, 930, 1015, 1000, 995, 1060, 965, 1110, 925, 1150, 885, 1210, 830, 1270, 803, 1295, 790], TR, 6.5);
  line(c1, Z8, [1295, 790, 1360, 765], TB, 5);
  line(c1, Z8, [1375, 750, 1425, 735], TR, 6);
  line(c1, Z8, [1425, 732, 1480, 728, 1568, 750], TB, 5);
  line(c1, Z9, [0, 750, 60, 768, 130, 810, 170, 825], TB, 5);
  line(c1, Z9, [190, 827, 320, 830, 370, 843], TR, 5.5);
  line(c1, Z9, [370, 843, 450, 850, 520, 862, 580, 872, 640, 892, 700, 903, 760, 930, 820, 965, 880, 980, 950, 1003, 995, 1015], TB, 5);
  line(c1, Z9, [1020, 1015, 1110, 1015, 1170, 990, 1230, 965], TR, 6);

  // candles: x, high, top, bottom, low (zoomed-crop coordinates)
  var r = 'r', c = 'c', m = 'm';
  var cd7 = [[13,1388,1453,1463,1490,r],[45,1368,1397,1430,1490,r],[72,1295,1328,1397,1397,r],[103,1245,1307,1333,1350,c],[130,1330,1345,1350,1380,c],[158,1235,1235,1318,1330,m],[190,1117,1117,1167,1215,m],[217,1027,1068,1130,1150,r],[248,1055,1093,1118,1163,r],[276,1140,1140,1228,1228,c],[308,1287,1318,1346,1346,c],[335,1262,1288,1320,1330,r],[366,1177,1214,1227,1277,r],[394,1090,1090,1105,1172,c],[425,1145,1180,1236,1236,c],[453,1125,1137,1263,1290,r],[480,1040,1045,1168,1172,r],[511,900,900,1042,1042,m],[539,768,793,825,1010,r],[570,658,800,842,948,c],[597,686,686,879,879,m],[628,512,512,779,790,m],[656,382,443,535,560,c],[688,590,625,725,725,c],[715,678,777,802,802,r],[746,674,703,780,820,r],[774,565,610,752,868,r],[801,455,510,562,635,r],[832,398,533,541,583,r],[860,480,605,607,632,c],[891,590,630,648,720,r],[919,500,516,652,660,r],[950,400,452,530,632,r],[978,255,380,452,545,r],[1009,152,152,375,392,r],[1037,25,115,348,375,c],[1064,208,278,392,392,r],[1096,300,358,494,494,c],[1123,375,396,586,685,r],[1154,248,306,418,440,r],[1181,168,310,312,345,c],[1213,240,285,367,417,c],[1240,318,352,375,470,r],[1271,210,258,322,337,r],[1299,45,70,310,347,r],[1330,110,158,175,292,c],[1358,215,244,400,400,c],[1385,385,415,417,583,r],[1417,415,484,522,535,c],[1444,488,513,588,600,c],[1476,550,574,610,672,r],[1503,463,537,716,758,c],[1534,693,743,790,842,c],[1560,785,830,912,918,c]];
  var cd8 = [[25,760,760,860,885,m],[52,698,698,795,795,c],[80,765,780,872,880,c],[112,853,853,957,1005,c],[139,922,942,950,972,r],[170,880,917,955,980,r],[198,865,902,928,958,r],[229,837,850,905,932,r],[257,815,842,870,870,r],[288,745,822,875,880,r],[316,797,805,818,860,c],[347,788,828,888,895,c],[374,835,850,895,908,r],[402,710,785,828,840,r],[433,775,787,855,868,c],[460,850,868,1013,1013,c],[491,965,988,1016,1030,r],[519,937,988,990,1010,c],[550,958,970,1022,1055,c],[578,1003,1005,1033,1060,r],[609,1003,1003,1025,1035,c],[637,970,1025,1060,1100,c],[668,975,996,1095,1120,r],[696,942,975,992,1025,r],[723,995,995,1080,1095,c],[754,1075,1082,1100,1105,c],[782,1085,1092,1108,1118,c],[813,1108,1108,1130,1145,c],[840,1125,1125,1180,1188,c],[872,1055,1055,1095,1095,m],[899,917,917,925,972,'p'],[931,770,793,858,868,r],[958,680,745,790,790,r],[986,662,735,745,785,r],[1017,710,769,775,798,c],[1045,708,752,758,790,r],[1076,680,695,750,778,r],[1103,528,558,762,762,r],[1134,557,557,625,668,c],[1162,610,610,660,700,r],[1193,592,635,665,672,c],[1221,655,676,695,716,r],[1252,670,695,735,738,c],[1280,712,725,830,862,c],[1307,785,802,834,842,r],[1338,792,808,827,827,c],[1366,712,725,870,875,r],[1397,645,667,725,745,r],[1425,687,687,735,745,c],[1456,718,752,778,795,c],[1484,762,775,790,805,c],[1515,780,788,838,845,c],[1543,790,842,850,883,c]];
  var cd9 = [[3,795,830,855,900,r],[33,788,812,858,860,c],[60,835,860,937,940,c],[92,935,938,1018,1030,c],[119,982,1025,1029,1060,c],[150,893,893,1032,1032,m],[178,740,740,858,858,m],[209,658,678,725,762,c],[237,625,652,737,737,r],[268,635,642,828,828,c],[296,838,840,928,928,c],[323,785,790,952,960,r],[354,828,828,908,915,c],[382,815,870,927,957,r],[413,828,846,875,898,r],[441,797,825,888,925,c],[472,905,915,945,970,c],[500,915,942,948,965,r],[531,888,935,957,997,r],[559,912,942,948,960,r],[590,955,957,1007,1022,c],[617,1005,1015,1068,1075,c],[645,978,1015,1075,1090,r],[676,912,938,1057,1057,r],[703,942,958,1002,1002,c],[735,958,978,1022,1050,c],[762,995,998,1068,1075,c],[794,1050,1060,1088,1095,c],[821,1027,1052,1058,1087,c],[852,1080,1088,1092,1148,c],[880,998,1035,1090,1110,r],[907,1010,1036,1050,1067,r],[939,978,1022,1055,1062,r],[966,978,1020,1058,1058,r],[997,1005,1005,1017,1050,r],[1025,965,994,998,1022,c],[1056,893,930,1025,1025,r],[1084,897,928,965,968,r],[1115,900,930,940,968,r],[1142,775,775,827,827,m],[1174,725,748,778,795,r],[1201,752,775,855,898,c],[1229,785,828,838,848,c]];
  var COL = { r: '#f03030', c: '#54ffff', m: '#ff10f0', p: '#ff60a0' };
  var cg = el(c1, 'g', { 'shape-rendering': 'crispEdges' });
  function candle(f, d) {
    var t = d[5], x = Math.round(f(d[0], 0)[0]), col = COL[t];
    var hi = Math.round(f(0, d[1])[1]), top = Math.round(f(0, d[2])[1]), bot = Math.round(f(0, d[3])[1]), lo = Math.round(f(0, d[4])[1]);
    el(cg, 'line', { x1: x + .5, x2: x + .5, y1: hi, y2: lo, stroke: col, 'stroke-width': 1 });
    if (t === 'r') el(cg, 'rect', { x: x - 2.5, y: top + .5, width: 6, height: Math.max(bot - top, 1), fill: '#000', stroke: col, 'stroke-width': 1 });
    else el(cg, 'rect', { x: x - 3, y: top, width: 7, height: Math.max(bot - top, 2), fill: col });
  }
  cd7.forEach(function (d) { candle(Z7, d); });
  cd8.forEach(function (d) { candle(Z8, d); });
  cd9.forEach(function (d) { candle(Z9, d); });

  // signals
  function bar(x, y, w, h, col) { el(c1, 'rect', { x: x, y: y, width: w, height: h, fill: col }); }
  [[100, 487], [257, 293], [413, 186], [1050, 296], [1653, 354]].forEach(function (b) { bar(b[0], b[1], 14, 8, '#0000f0'); });
  [[603, 424, 12, 5], [681, 440, 14, 7], [849, 500, 9, 5], [1251, 476, 12, 7]].forEach(function (b) { bar(b[0], b[1], b[2], b[3], '#ffff00'); });
  function arrow(x, y, up) {
    var d = up ? 'M' + (x - 7) + ' ' + y + 'L' + x + ' ' + (y - 11) + 'L' + (x + 7) + ' ' + y + 'H' + (x + 1.5) + 'V' + (y + 11) + 'H' + (x - 1.5) + 'V' + y + 'Z'
      : 'M' + (x - 7) + ' ' + y + 'L' + x + ' ' + (y + 11) + 'L' + (x + 7) + ' ' + y + 'H' + (x + 1.5) + 'V' + (y - 11) + 'H' + (x - 1.5) + 'V' + y + 'Z';
    el(c1, 'path', { d: d, fill: up ? '#ff0000' : '#00b800' });
  }
  arrow(50, 589, false); arrow(105, 506, false); arrow(263, 316, false); arrow(328, 267, false);
  arrow(140, 588, true); arrow(182, 544, true); arrow(442, 282, true); arrow(486, 244, true); arrow(1458, 502, true);

  function hand(x, y) {
    var g = el(c1, 'g', { transform: 'translate(' + (x - 9) + ' ' + (y - 10) + ')' });
    el(g, 'path', { d: 'M5 1q2-1 3 1l1 6 6 1q3 1 3 4l-1 5q-1 4-5 4h-3q-2 0-4-3l-4-5q-1-2 1-2.500l3 2-2-10q0-2 2-2.500z', fill: '#ffcf90', stroke: '#e08a20', 'stroke-width': 1.2 });
  }
  [[610, 441], [822, 505], [856, 517], [935, 517], [1122, 440], [1257, 495]].forEach(function (h) { hand(h[0], h[1]); });

  // a sell tag that runs up under the legend: only its lower part shows
  var defs = el(c1, 'defs', {});
  var tc = el(defs, 'clipPath', { id: 'topclip' });
  el(tc, 'rect', { x: 0, y: 97, width: 1710, height: 100 });
  var cp = el(defs, 'clipPath', { id: 'axclip' });
  el(cp, 'rect', { x: 0, y: 67, width: 1710, height: 605 });

  function mk(x, y, t, col, clip) {
    var a = { x: x, y: y, 'class': 'mk', fill: col };
    if (clip) a['clip-path'] = 'url(#' + clip + ')';
    el(c1, 'text', a, t);
  }
  var YL = '#ffff00', CY = '#30f0f0', GN = '#00e000', RD = '#f01010', LB = '#70b0f0', PK = '#f070c0';
  mk(510, 98, '顶卖', YL, 'topclip');
  [[251, 201], [329, 234], [151, 477], [1034, 270]].forEach(function (p) { mk(p[0], p[1], '顶卖', YL); });
  [[329, 224], [264, 271], [51, 558], [105, 473]].forEach(function (p) { mk(p[0], p[1], '三平顶', CY); });
  [[442, 292], [486, 254], [183, 547], [1458, 508]].forEach(function (p) { mk(p[0], p[1], '三平底', YL); });
  [[262, 290], [40, 540], [94, 466], [1034, 279], [990, 337], [1660, 352]].forEach(function (p) { mk(p[0], p[1], '★卖', GN); });
  [[105, 478], [1659, 343]].forEach(function (p) { mk(p[0], p[1], '减仓', LB); });
  [[934, 493], [1122, 411], [1358, 424]].forEach(function (p) { mk(p[0], p[1], '★买', RD); });
  [[610, 427], [821, 489], [856, 502], [934, 502], [1122, 421], [1257, 479]].forEach(function (p) { mk(p[0], p[1], '反弹', RD); });
  mk(1136, 423, '加仓', PK);

  // extreme price marks
  el(c1, 'text', { x: 417, y: 106, 'class': 'gt' }, '50.89');
  el(c1, 'path', { d: 'M414 106 L398 101 M398 101 l5 -4 M398 101 l3 6', stroke: '#999', 'stroke-width': 1.2, fill: 'none' });
  el(c1, 'text', { x: 25, y: 645, 'class': 'gt' }, '19.88');
  el(c1, 'path', { d: 'M22 643 H5 M5 643 l5 -4 M5 643 l5 4', stroke: '#999', 'stroke-width': 1.2, fill: 'none' });
  el(c1, 'text', { x: 1632, y: 438, 'class': 'gt', 'clip-path': 'url(#axclip)' }, '32.30 - 32.30');

  // corner icons and rise tag
  el(c1, 'path', { d: 'M1668 74 L1676 82 L1668 90 L1660 82 Z', fill: 'none', stroke: '#777', 'stroke-width': 1.2 });
  el(c1, 'rect', { x: 1689, y: 74, width: 16, height: 16, rx: 3, fill: '#333', stroke: '#888', 'stroke-width': 1.5 });
  el(c1, 'rect', { x: 1697, y: 77, width: 5, height: 10, fill: '#bbb' });
  el(c1, 'rect', { x: 1626, y: 650, width: 19, height: 20, fill: '#8c1818' });
  el(c1, 'text', { x: 1635.5, y: 660, 'class': 'zh' }, '张');

  /* ---------- panel 2 ---------- */
  [766, 830, 895, 959].forEach(function (y) { hl(c2, y + .5, 0, 1711, '#a00000', 1, '2 3'); });
  el(c2, 'line', { x1: 1711.5, x2: 1711.5, y1: 672, y2: 1030, stroke: RED, 'stroke-width': 1.5 });
  hl(c2, 672.5, 0, 540, RED, 2); hl(c2, 672.5, 1620, 1788, RED, 2);
  [[701, 100], [766, 80], [830, 60], [895, 40], [959, 20]].forEach(function (t) {
    hl(c2, t[0], 1711, 1719, RED, 1);
    el(c2, 'text', { x: 1778, y: t[0] + 1, 'class': 'ax', textLength: t[1] === 100 ? 46 : 45, lengthAdjust: 'spacingAndGlyphs' }, t[1].toFixed(2));
  });
  [734, 798, 863, 927, 991].forEach(function (y) { hl(c2, y, 1711, 1715, RED, 1); });
  hl(c2, 702, 3, 540, '#00d000', 1.5); hl(c2, 702, 1620, 1672, '#00d000', 1.5);

  // white blocks
  [[3, 230, 22, 400], [22, 265, 42, 428], [35, 272, 63, 455], [63, 275, 85, 400], [85, 310, 92, 340], [92, 307, 112, 402], [112, 257, 130, 463], [130, 200, 160, 445], [112, 400, 142, 463], [160, 235, 180, 370], [327, 290, 345, 315], [345, 195, 375, 370], [375, 230, 385, 310], [385, 240, 405, 397], [405, 238, 423, 478], [423, 208, 435, 478], [435, 208, 452, 413], [659, 258, 688, 328]].forEach(function (b) {
    var a = Z10(b[0], b[1]), d = Z10(b[2], b[3]);
    el(c2, 'rect', { x: Math.round(a[0]), y: Math.round(a[1]), width: Math.round(d[0] - a[0]), height: Math.round(d[1] - a[1]), fill: '#fff' });
  });
  // green bars
  function gb(f, x, y1, y2) { var a = f(x, y1), d = f(x, y2); el(c2, 'rect', { x: Math.round(a[0] - 2), y: 752, width: 4.5, height: Math.round(d[1]) - 752, fill: '#10f010' }); }
  [[1041, 333], [1099, 288], [1119, 342], [1352, 680], [1373, 316], [1392, 320], [1412, 490], [1452, 297], [1470, 855], [1527, 553], [1548, 757], [1565, 720]].forEach(function (b) { gb(Z10, b[0], 275, b[1]); });
  [[19, 573], [38, 738], [584, 250], [602, 255], [916, 310], [934, 842], [1031, 663], [1051, 375], [1091, 240]].forEach(function (b) { gb(Z12, b[0], 225, b[1]); });

  var OR = '#d88000', LR = '#e81010';
  line(c2, Z10, [180, 310, 200, 460, 222, 597, 245, 597, 262, 497, 300, 497, 320, 440, 345, 270], LR, 1.5);
  line(c2, Z10, [455, 280, 478, 470, 498, 570, 518, 510, 535, 400, 555, 340, 575, 410, 595, 510, 613, 528, 632, 480, 660, 330], LR, 1.5);
  line(c2, Z10, [688, 258, 710, 300, 730, 480, 750, 530, 768, 550, 788, 485, 805, 500, 828, 560, 848, 567, 865, 430, 887, 385, 905, 480, 920, 650, 945, 850, 965, 915, 985, 960, 1005, 990, 1042, 1038, 1060, 1028, 1100, 1028, 1120, 1050, 1150, 1060, 1178, 1060, 1200, 1030, 1235, 960, 1252, 948, 1295, 1000, 1332, 970, 1355, 995, 1372, 1060, 1392, 1075, 1420, 1075, 1425, 1078, 1495, 1078, 1510, 1070, 1540, 1070, 1568, 1085], LR, 1.5);
  line(c2, Z12, [0, 885, 38, 885, 60, 865, 80, 780, 100, 650, 115, 525, 135, 473, 155, 500, 175, 540, 195, 550, 215, 420, 235, 365, 252, 325, 272, 430, 295, 510, 315, 610, 335, 680, 355, 735, 372, 752, 390, 705, 408, 640, 428, 615, 448, 670, 465, 745, 485, 780, 505, 792, 540, 800, 560, 812, 600, 865, 625, 835, 640, 750, 660, 650, 682, 535, 703, 600, 725, 700, 738, 760, 758, 790, 778, 775, 798, 813, 818, 810, 858, 855, 875, 865, 915, 868, 940, 882, 950, 885, 975, 860, 1012, 858, 1032, 885, 1095, 885, 1120, 872, 1145, 855, 1205, 840, 1225, 770, 1245, 700, 1268, 650, 1285, 550, 1305, 465, 1323, 437, 1343, 495], LR, 1.5);
  line(c2, Z10, [8, 825, 50, 890, 90, 920, 130, 990, 165, 1015, 195, 985, 220, 965, 245, 965, 265, 980, 285, 970, 305, 985, 360, 1038, 380, 1033, 420, 1065, 440, 1065, 460, 1050, 490, 1015, 520, 1015, 555, 1025, 595, 1010, 625, 1025, 655, 1033, 675, 1052, 690, 1038, 710, 1033, 750, 997, 780, 992, 835, 973, 885, 998, 910, 990, 945, 955, 985, 905, 1040, 810, 1085, 760, 1145, 670, 1190, 632, 1260, 600, 1335, 575, 1400, 520, 1465, 440, 1520, 380, 1568, 315], OR, 1.5);
  line(c2, Z12, [110, 225, 140, 250, 195, 278, 215, 300, 252, 328, 290, 347, 315, 347, 340, 335, 365, 328, 420, 344, 455, 344, 500, 325, 545, 315, 580, 285, 600, 262, 620, 258, 660, 280, 680, 302, 700, 302, 720, 293, 740, 300, 760, 293, 780, 297, 810, 317, 835, 322, 865, 322, 895, 332, 945, 307, 975, 314, 1010, 307, 1060, 270, 1100, 253, 1175, 253, 1210, 260, 1240, 290, 1265, 303, 1290, 350, 1305, 378, 1340, 415], OR, 1.5);
  hl(c2, 976, 5, 1671, '#0000f0', 3.5);
  hl(c2, 1024, 5, 1671, '#ffff00', 3.5);
  hl(c2, 1030, 0, 1788, RED, 2);
  // price tag on the axis
  el(c2, 'rect', { x: 1712, y: 848, width: 75, height: 24, fill: '#000080' });
  el(c2, 'text', { x: 1714, y: 860, 'class': 'axb' }, '46.90');

  /* ---------- panel 3 ---------- */
  [1077, 1120, 1163, 1208].forEach(function (y) { hl(c3, y + .5, 0, 1711, '#a00000', 1, '2 3'); });
  el(c3, 'line', { x1: 1711.5, x2: 1711.5, y1: 1031, y2: 1283, stroke: RED, 'stroke-width': 1.5 });
  [[1077, '30000'], [1120, '20000'], [1163, '10000'], [1208, '0']].forEach(function (t) {
    hl(c3, t[0], 1711, 1719, RED, 1);
    var a = { x: 1778, y: t[0] + 1, 'class': 'ax' };
    if (t[1].length > 1) { a.textLength = 50; a.lengthAdjust = 'spacingAndGlyphs'; }
    el(c3, 'text', a, t[1]);
  });
  [1098, 1141, 1185].forEach(function (y) { hl(c3, y, 1711, 1715, RED, 1); });
  hl(c3, 1208.5, 5, 1671, '#909090', 1.5);
  var YY = '#e8e800', RR = '#e81010';
  line(c3, Z11, [48, 130, 70, 300, 88, 445, 105, 493, 125, 420, 142, 300, 165, 258, 185, 330, 205, 458, 222, 452, 243, 335, 262, 335, 283, 445, 302, 430, 322, 300, 338, 240, 358, 190, 380, 318, 398, 213, 418, 267, 438, 267, 458, 435, 478, 465, 495, 390, 515, 262, 535, 255, 555, 237, 573, 345, 595, 375, 613, 390, 632, 280, 650, 233, 672, 233, 692, 345, 710, 380, 730, 480, 750, 368, 768, 362, 788, 362, 808, 472, 828, 490, 848, 410, 866, 280, 888, 355, 905, 430, 925, 492, 965, 492, 985, 507, 1022, 507, 1042, 565, 1060, 507, 1100, 507, 1120, 565, 1138, 510, 1160, 455, 1178, 398, 1195, 382, 1215, 377, 1237, 355, 1257, 435, 1275, 480, 1295, 515, 1315, 440, 1335, 440, 1352, 488, 1375, 512, 1415, 512, 1430, 525, 1470, 525, 1490, 490, 1510, 435, 1528, 435, 1545, 500, 1568, 565], YY, 1.5);
  [[40, 1343, 55, 1320, 78, 1250, 95, 1110, 115, 1005, 135, 985, 155, 1130, 175, 1182, 195, 1175, 213, 1072, 232, 1130, 252, 1170, 272, 1278, 292, 1238, 312, 1303, 370, 1303, 390, 1225, 408, 1212, 428, 1212, 448, 1295, 468, 1343],
   [508, 1343, 525, 1315, 562, 1315, 582, 1343],
   [602, 1343, 620, 1290, 640, 1205, 662, 1205, 682, 1183, 702, 1255, 725, 1255, 735, 1260, 760, 1260, 778, 1205, 798, 1245, 818, 1245, 838, 1295, 858, 1310, 875, 1280, 895, 1250, 915, 1280, 935, 1315, 955, 1300, 975, 1245, 995, 1245, 1012, 1290, 1032, 1343],
   [1092, 1343, 1108, 1300, 1130, 1265, 1148, 1230, 1168, 1240, 1188, 1240, 1207, 1285, 1225, 1255, 1248, 1222, 1265, 1188, 1285, 1175, 1305, 1130, 1325, 1170, 1342, 1242]].forEach(function (p) { line(c3, Z12, p, YY, 1.5); });
  line(c3, Z11, [8, 190, 30, 150, 48, 130, 65, 380, 88, 680, 105, 720, 125, 500, 142, 300, 165, 258, 185, 440, 205, 692, 222, 692, 243, 475, 262, 480, 283, 685, 302, 668, 322, 400, 338, 240, 358, 190, 380, 495, 398, 390, 420, 445, 438, 405, 458, 680, 478, 710, 495, 520, 515, 262, 535, 255, 555, 237, 573, 440, 595, 465, 613, 487, 632, 280, 650, 233, 672, 233, 690, 470, 710, 505, 730, 685, 748, 448, 768, 443, 788, 448, 808, 635, 828, 650, 848, 480, 866, 275, 888, 440, 905, 630, 925, 690, 945, 632, 965, 615, 985, 630, 1003, 655, 1022, 650, 1042, 775, 1060, 632, 1090, 632, 1100, 640, 1120, 755, 1150, 560, 1178, 398, 1195, 382, 1215, 377, 1237, 355, 1257, 470, 1275, 600, 1295, 632, 1315, 500, 1335, 497, 1352, 625, 1375, 648, 1395, 635, 1413, 612, 1430, 620, 1450, 600, 1470, 615, 1490, 585, 1510, 497, 1528, 503, 1545, 590, 1568, 695], RR, 1.5);
  line(c3, Z12, [0, 1447, 20, 1428, 38, 1433, 60, 1375, 78, 1250, 95, 1110, 115, 1005, 135, 985, 155, 1200, 175, 1248, 195, 1240, 213, 1072, 232, 1215, 252, 1260, 272, 1410, 292, 1285, 312, 1395, 335, 1410, 355, 1410, 372, 1390, 390, 1255, 408, 1238, 428, 1250, 448, 1350, 468, 1440, 505, 1428, 525, 1382, 542, 1377, 562, 1395, 582, 1460, 602, 1465, 620, 1360, 640, 1270, 662, 1305, 682, 1278, 702, 1428, 722, 1395, 738, 1402, 760, 1385, 778, 1270, 798, 1308, 818, 1303, 838, 1400, 858, 1415, 895, 1250, 935, 1385, 955, 1370, 975, 1282, 995, 1287, 1012, 1345, 1032, 1440, 1050, 1433, 1090, 1435, 1110, 1360, 1130, 1295, 1148, 1230, 1168, 1240, 1188, 1240, 1207, 1318, 1225, 1290, 1248, 1262, 1265, 1188, 1285, 1175, 1305, 1130, 1342, 1385], RR, 1.5);
  el(c3, 'rect', { x: 1712.5, y: 1260.5, width: 47, height: 22, fill: '#000', stroke: RED });
  el(c3, 'text', { x: 1715, y: 1272, 'class': 'x100' }, 'X100');

  /* ---------- ticks on the date axis ---------- */
  var tk = document.getElementById('ticks');
  [273, 330, 507, 564, 752, 861, 918, 970, 1107, 1172, 1235, 1353, 1416, 1462, 1584, 1643, 1701].forEach(function (x) {
    el(tk, 'line', { x1: x + .5, x2: x + .5, y1: 0, y2: 5, stroke: RED });
  });
})();
```
